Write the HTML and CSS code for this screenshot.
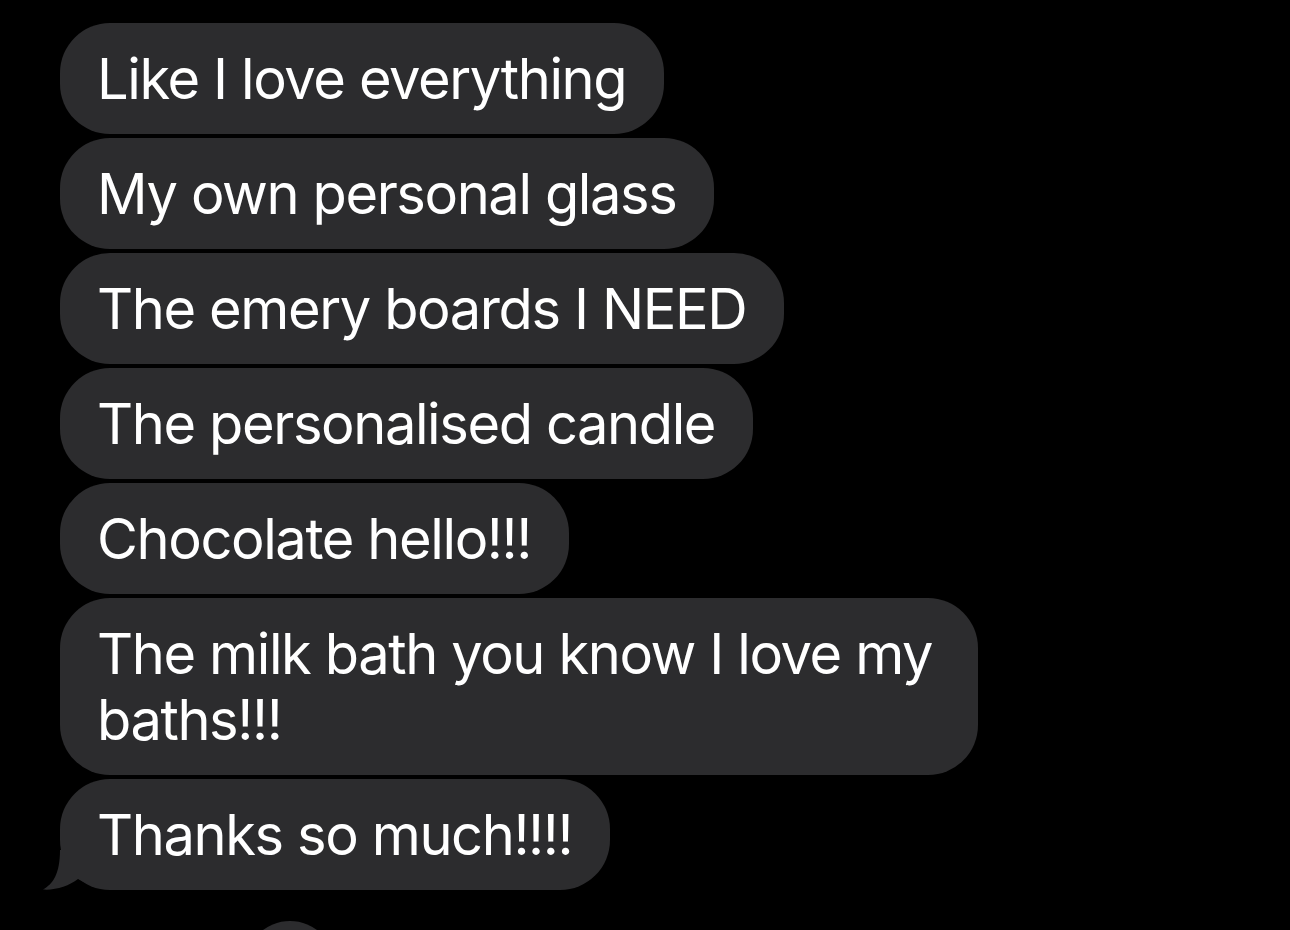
FILE: index.html
```html
<!DOCTYPE html>
<html lang="en">
<head>
  <meta charset="UTF-8" />
  <meta name="viewport" content="width=device-width, initial-scale=1.0" />
  <title>Messages</title>
  <link rel="stylesheet" href="styles.css">
</head>
<body>
  <div class="thread">
    <div class="bubble">Like I love everything</div>
    <div class="bubble">My own personal glass</div>
    <div class="bubble">The emery boards I NEED</div>
    <div class="bubble">The personalised candle</div>
    <div class="bubble">Chocolate hello!!!</div>
    <div class="bubble">The milk bath you know I love my baths!!!</div>
    <div class="bubble last">
      Thanks so much!!!!
      <svg class="tail" width="45" height="40" viewBox="0 0 45 40">
        <path d="M17,0 C17,24 10,34 0,39.5 C12,40.5 26,36 35,29 L45,34 L45,0 Z" fill="#2c2c2e"/>
      </svg>
    </div>
    <div class="typing"></div>
  </div>
</body>
</html>
```

FILE: styles.css
```css
html, body {
  margin: 0;
  padding: 0;
  background: #000;
  height: 100%;
  overflow: hidden;
}
.thread {
  display: flex;
  flex-direction: column;
  align-items: flex-start;
  gap: 4px;
  padding: 23px 0 0 60px;
  font-family: Inter, "Noto Sans", sans-serif;
  font-size: 56px;
  letter-spacing: -1.4px;
  line-height: 66px;
  color: #fff;
}
.bubble {
  position: relative;
  box-sizing: border-box;
  max-width: 918px;
  padding: 22.5px 38px 22.5px 37px;
  background: #2c2c2e;
  border-radius: 50px;
}
.tail {
  position: absolute;
  left: -17px;
  bottom: 0;
  display: block;
}
.typing {
  margin: 27px 0 0 185px;
  width: 90px;
  height: 90px;
  border-radius: 50%;
  background: #2c2c2e;
}
```
